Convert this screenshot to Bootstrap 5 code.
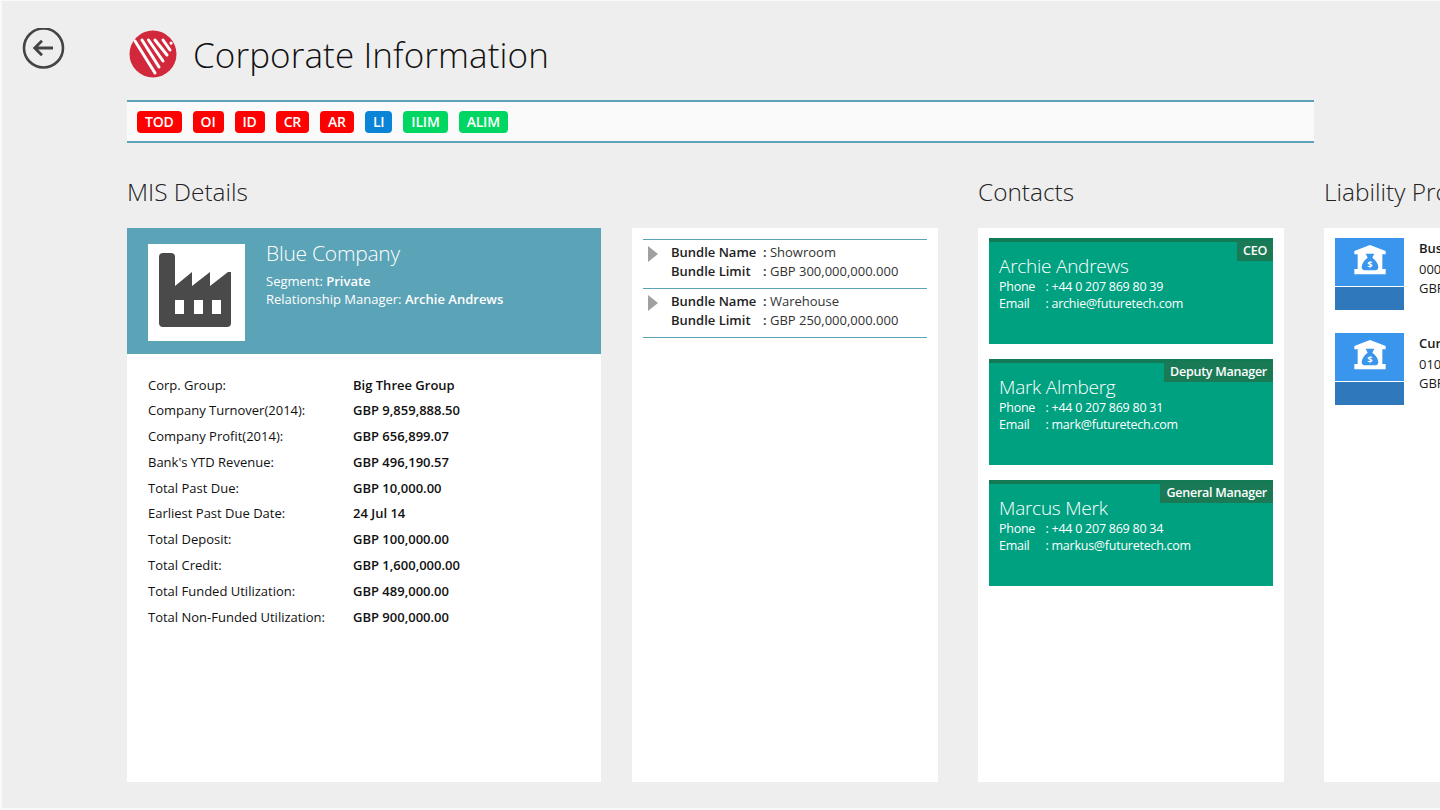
<!DOCTYPE html>
<html lang="en">
<head>
<meta charset="utf-8">
<title>Corporate Information</title>
<link href="https://cdn.jsdelivr.net/npm/bootstrap@5.3.0/dist/css/bootstrap.min.css" rel="stylesheet">
<style>
html,body{height:810px;overflow:hidden}
body{background:#eee;font-family:"Open Sans","Noto Sans",sans-serif;color:#1a1a1a;font-size:13px}
.shell{width:1440px;height:810px;overflow:hidden;box-shadow:inset 2px 1px 0 #f9f9f9,inset 0 -2px 0 #f9f9f9}
.rail{width:127px;flex:none;padding:28px 0 0 22px}
.stage{flex:none;width:1313px;padding-top:28px}
.brand{height:52px;margin-bottom:20px}
.brand svg{margin:0 16px 0 2px}
.page-title{font-size:35px;font-weight:300;line-height:52px;margin:0;padding-top:2px;color:#111;letter-spacing:.1px}
.tagbar{width:1187px;height:43px;background:#fafafa;border-top:2px solid #5ba3b6;border-bottom:2px solid #5ba3b6;padding-left:10px;gap:11px}
.tag{height:22px;border-radius:4px;color:#fff;font-weight:600;font-size:14px;line-height:22px;padding:0 8px;letter-spacing:-.2px}
.t-red{background:#f00}.t-blue{background:#0a84d6}.t-green{background:#00d763}
.cols{margin-top:31px;width:1500px;gap:40px}
.sec-title{font-size:24.400px;font-weight:300;line-height:36px;margin:0 0 18px;color:#222;letter-spacing:0;white-space:nowrap}
.panel{background:#fff;height:554px;overflow:hidden}
.p-mis{width:474px}.p-bundle{width:306px;padding:11px 11px 0 11px}.p-contact{width:306px;padding:10px 11px}.p-liab{width:200px;padding:10px 0 10px 11px}
.mis-wrap{gap:31px}
.cohead{height:126px;background:#5ba3b6;color:#fff;padding:16px 21px;gap:21px}
.coimg{width:97px;height:97px;background:#fff;flex:none;padding:0 4px 6px 0}
.coname{font-size:21px;font-weight:300;line-height:26px;margin:-4px 0 6px;letter-spacing:-.25px}
.coline{font-size:13px;line-height:18px;letter-spacing:0}
.coline b{font-weight:600}
.facts{padding:18.500px 21px 0;margin:0}
.facts dt,.facts dd{font-size:13px;line-height:25.800px;margin:0;color:#111}
.facts dt{font-weight:400;width:205px;flex:none}
.facts dd{font-weight:600}
.bundle{border-top:1px solid #5ba3b6;height:49px;padding:3px 0 0 5px;gap:13px;line-height:18.500px;color:#333}
.bundle:last-child{height:1px;padding:0}
.bundle b{font-weight:600;color:#222}
.blabel{display:inline-block;width:92px}
.tri{width:0;height:0;border-left:10px solid #a0a0a0;border-top:8px solid transparent;border-bottom:8px solid transparent;margin-top:3px;flex:none}
.ccard{background:#00a181;color:#fff;height:106px;border-top:4px solid #127a55;margin-bottom:15px;padding:12px 10px 0}
.role{top:-1px;right:0;background:#1a7a56;font-weight:600;line-height:20px;font-size:12.500px;padding:0 6px;letter-spacing:-.25px}
.cname{font-size:19px;font-weight:300;line-height:24px;letter-spacing:-.25px}
.cline{line-height:17px;letter-spacing:-.25px;font-size:12.500px}
.clabel{display:inline-block;width:46.500px}
.lrow{gap:15px;margin-bottom:23px}
.ltile{width:69px;flex:none}
.ltop{height:47.500px;background:#3a96ec}
.lbot{height:23px;background:#2f78bc;margin-top:1.500px}
.ltext{line-height:19px;white-space:nowrap;padding-top:1px}
.ltext b{font-weight:600;display:block;margin-bottom:2px}
</style>
</head>
<body>
<div class="shell d-flex">
  <div class="rail">
    <svg width="44" height="44" viewBox="0 0 44 44" fill="none" stroke="#444"><circle cx="21.500" cy="20" r="19.500" stroke-width="2.600"/><path d="M31 20H13M20 12.700l-7.300 7.300 7.300 7.300" stroke-width="2.800"/></svg>
  </div>
  <div class="stage">
    <div class="brand d-flex align-items-center">
      <svg width="48" height="48" viewBox="0 0 48 48"><circle cx="24" cy="24" r="23.500" fill="#d2283c"/><g stroke="#fff" stroke-width="3" stroke-linecap="round"><path d="M6 11 26 43M13 10 30 37M19.500 10 34 31M26 10 38 25M34 10 41 20M42 13l.1.1"/></g></svg>
      <h1 class="page-title">Corporate Information</h1>
    </div>
    <div class="tagbar d-flex align-items-center">
      <span class="tag t-red">TOD</span><span class="tag t-red">OI</span><span class="tag t-red">ID</span><span class="tag t-red">CR</span><span class="tag t-red">AR</span><span class="tag t-blue">LI</span><span class="tag t-green">ILIM</span><span class="tag t-green">ALIM</span>
    </div>
    <div class="cols d-flex">
      <section>
        <h2 class="sec-title">MIS Details</h2>
        <div class="d-flex mis-wrap">
          <div class="panel p-mis">
            <div class="cohead d-flex">
              <div class="coimg d-flex align-items-center justify-content-center">
                <svg width="72" height="74" viewBox="0 0 72 74"><path d="M4 0h8a4 4 0 0 1 4 4v29L33 19v14l18-14v14l18-14h3v51a4 4 0 0 1-4 4H4a4 4 0 0 1-4-4V4a4 4 0 0 1 4-4z" fill="#4a4a4a"/><path d="M16 47h9v14h-9zM35 47h9v14h-9zM53 47h9v14h-9z" fill="#fff"/></svg>
              </div>
              <div>
                <div class="coname">Blue Company</div>
                <div class="coline">Segment: <b>Private</b></div>
                <div class="coline">Relationship Manager: <b>Archie Andrews</b></div>
              </div>
            </div>
            <dl class="facts">
              <div class="d-flex"><dt>Corp. Group:</dt><dd>Big Three Group</dd></div>
              <div class="d-flex"><dt>Company Turnover(2014):</dt><dd>GBP 9,859,888.50</dd></div>
              <div class="d-flex"><dt>Company Profit(2014):</dt><dd>GBP 656,899.07</dd></div>
              <div class="d-flex"><dt>Bank's YTD Revenue:</dt><dd>GBP 496,190.57</dd></div>
              <div class="d-flex"><dt>Total Past Due:</dt><dd>GBP 10,000.00</dd></div>
              <div class="d-flex"><dt>Earliest Past Due Date:</dt><dd>24 Jul 14</dd></div>
              <div class="d-flex"><dt>Total Deposit:</dt><dd>GBP 100,000.00</dd></div>
              <div class="d-flex"><dt>Total Credit:</dt><dd>GBP 1,600,000.00</dd></div>
              <div class="d-flex"><dt>Total Funded Utilization:</dt><dd>GBP 489,000.00</dd></div>
              <div class="d-flex"><dt>Total Non-Funded Utilization:</dt><dd>GBP 900,000.00</dd></div>
            </dl>
          </div>
          <div class="panel p-bundle">
            <div class="bundle d-flex"><span class="tri"></span><div><div><b class="blabel">Bundle Name</b><b>:</b> Showroom</div><div><b class="blabel">Bundle Limit</b><b>:</b> GBP 300,000,000.000</div></div></div>
            <div class="bundle d-flex"><span class="tri"></span><div><div><b class="blabel">Bundle Name</b><b>:</b> Warehouse</div><div><b class="blabel">Bundle Limit</b><b>:</b> GBP 250,000,000.000</div></div></div>
            <div class="bundle"></div>
          </div>
        </div>
      </section>
      <section>
        <h2 class="sec-title">Contacts</h2>
        <div class="panel p-contact">
          <div class="ccard position-relative"><span class="role position-absolute">CEO</span><div class="cname">Archie Andrews</div><div class="cline"><span class="clabel">Phone</span>: +44 0 207 869 80 39</div><div class="cline"><span class="clabel">Email</span>: archie@futuretech.com</div></div>
          <div class="ccard position-relative"><span class="role position-absolute">Deputy Manager</span><div class="cname">Mark Almberg</div><div class="cline"><span class="clabel">Phone</span>: +44 0 207 869 80 31</div><div class="cline"><span class="clabel">Email</span>: mark@futuretech.com</div></div>
          <div class="ccard position-relative"><span class="role position-absolute">General Manager</span><div class="cname">Marcus Merk</div><div class="cline"><span class="clabel">Phone</span>: +44 0 207 869 80 34</div><div class="cline"><span class="clabel">Email</span>: markus@futuretech.com</div></div>
        </div>
      </section>
      <section>
        <h2 class="sec-title">Liability Products</h2>
        <div class="panel p-liab">
          <div class="lrow d-flex"><div class="ltile"><div class="ltop d-flex align-items-center justify-content-center"><svg width="50" height="45" viewBox="0 0 150 135"><path d="M75 18 122 36V46H112V90H122V106H28V90H38V46H28V36Z" fill="#fff"/><path d="M62 44H88L82 56C94 64 100 76 100 84 100 92 94 94 88 94H62C56 94 50 92 50 84 50 76 56 64 68 56Z" fill="#3a96ec"/><text x="75" y="87" font-size="28" font-weight="700" fill="#fff" text-anchor="middle">$</text></svg></div><div class="lbot"></div></div><div class="ltext"><b>Business</b>000123<br>GBP 100</div></div>
          <div class="lrow d-flex"><div class="ltile"><div class="ltop d-flex align-items-center justify-content-center"><svg width="50" height="45" viewBox="0 0 150 135"><path d="M75 18 122 36V46H112V90H122V106H28V90H38V46H28V36Z" fill="#fff"/><path d="M62 44H88L82 56C94 64 100 76 100 84 100 92 94 94 88 94H62C56 94 50 92 50 84 50 76 56 64 68 56Z" fill="#3a96ec"/><text x="75" y="87" font-size="28" font-weight="700" fill="#fff" text-anchor="middle">$</text></svg></div><div class="lbot"></div></div><div class="ltext"><b>Current</b>010123<br>GBP 100</div></div>
        </div>
      </section>
    </div>
  </div>
</div>
<script src="https://cdn.jsdelivr.net/npm/bootstrap@5.3.0/dist/js/bootstrap.bundle.min.js"></script>
</body>
</html>
